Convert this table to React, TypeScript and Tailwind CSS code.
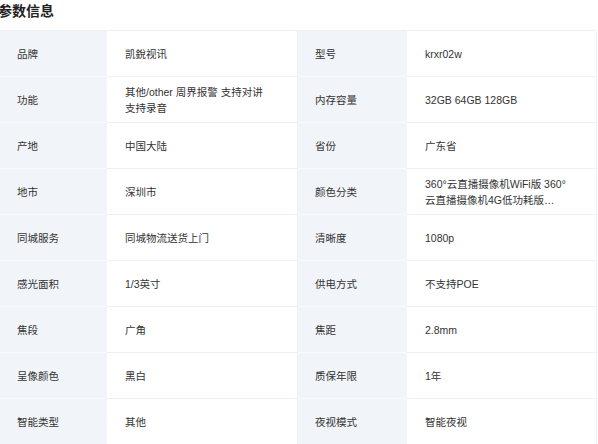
import React from 'react';

const rows: [string, string, string, string][] = [
    ['品牌', '凯銳视讯', '型号', 'krxr02w'],
    ['功能', '其他/other 周界报警 支持对讲 支持录音', '内存容量', '32GB 64GB 128GB'],
    ['产地', '中国大陆', '省份', '广东省'],
    ['地市', '深圳市', '颜色分类', '360°云直播摄像机WiFi版 360°云直播摄像机4G低功耗版【包邮】 360°云直播摄像机4G低功耗版'],
    ['同城服务', '同城物流送货上门', '清晰度', '1080p'],
    ['感光面积', '1/3英寸', '供电方式', '不支持POE'],
    ['焦段', '广角', '焦距', '2.8mm'],
    ['呈像颜色', '黑白', '质保年限', '1年'],
    ['智能类型', '其他', '夜视模式', '智能夜视'],
];

const Label = ({ text, last }: { text: string; last: boolean }) => (
    <div className={`bg-[#f1f4f8] h-[46px] flex items-center px-[17px] ${last ? '' : 'border-b border-[#f8f9fb]'}`}>
        <span>{text}</span>
    </div>
);

const Value = ({ text, last }: { text: string; last: boolean }) => (
    <div className={`bg-white h-[46px] flex items-center pl-[18px] pr-[16px] border-r border-[#edf0f4] ${last ? '' : 'border-b border-[#edf0f4]'}`}>
        <span className="line-clamp-2 break-keep">{text}</span>
    </div>
);

export default function App() {
    return (
        <div className="w-[598px] h-[444px] overflow-hidden bg-white text-[#333] font-['Liberation_Sans','Noto_Sans_CJK_SC',sans-serif]">
            <h2 className="h-[30px] -ml-[2px] pt-[1px] text-[14px] leading-[20px] font-bold text-[#222]">参数信息</h2>
            <div className="w-[597px] grid grid-cols-[107px_191px_109px_190px] border-t border-[#edf0f4] rounded-tr-[3px] text-[10.5px] leading-[16px]">
                {rows.map((r, i) => {
                    const last = i === rows.length - 1;
                    return (
                        <React.Fragment key={i}>
                            <Label text={r[0]} last={last} />
                            <Value text={r[1]} last={last} />
                            <Label text={r[2]} last={last} />
                            <Value text={r[3]} last={last} />
                        </React.Fragment>
                    );
                })}
            </div>
        </div>
    );
}
